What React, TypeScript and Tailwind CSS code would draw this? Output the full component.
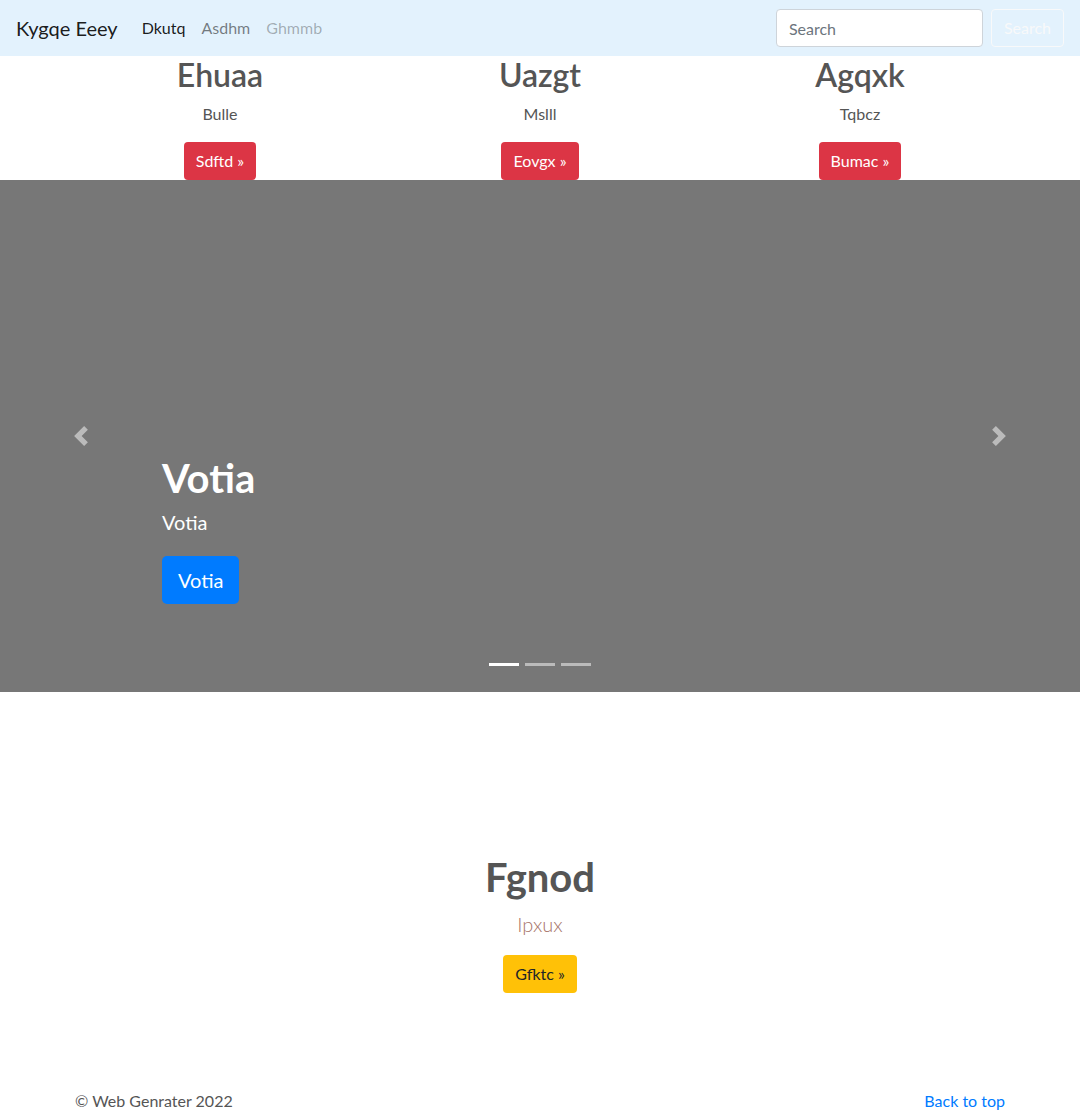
import React, { useState } from 'react';

const font = { fontFamily: '"Segoe UI", Lato, "Noto Sans", sans-serif' };

const features = [
  { title: 'Ehuaa', text: 'Bulle', button: 'Sdftd »' },
  { title: 'Uazgt', text: 'Mslll', button: 'Eovgx »' },
  { title: 'Agqxk', text: 'Tqbcz', button: 'Bumac »' },
];

const Navbar: React.FC = () => (
  <nav className="h-14 bg-[#e3f2fd] flex items-center px-4">
    <a href="#" className="text-[20px] leading-[30px] text-[rgba(0,0,0,0.9)] mr-4">
      Kygqe Eeey
    </a>
    <ul className="flex">
      <li>
        <a href="#" className="block px-2 py-2 text-[rgba(0,0,0,0.9)]">Dkutq</a>
      </li>
      <li>
        <a href="#" className="block px-2 py-2 text-[rgba(0,0,0,0.5)]">Asdhm</a>
      </li>
      <li>
        <a href="#" className="block px-2 py-2 text-[rgba(0,0,0,0.3)]">Ghmmb</a>
      </li>
    </ul>
    <form className="ml-auto flex items-center">
      <input
        type="search"
        placeholder="Search"
        className="w-[207px] h-[38px] px-3 rounded border border-[#ced4da] bg-white text-base text-[#495057] placeholder:text-[#6c757d] outline-none mr-2"
      />
      <button
        type="button"
        className="h-[38px] px-3 rounded border border-[#f8f9fa] text-[#f8f9fa] text-base"
      >
        Search
      </button>
    </form>
  </nav>
);

const Chevron: React.FC<{ dir: 'left' | 'right' }> = ({ dir }) => (
  <svg width="20" height="20" viewBox="0 0 8 8" fill="#fff" className="opacity-50">
    {dir === 'left' ? (
      <path d="M5.25 0l-4 4 4 4 1.5-1.5L4.25 4l2.5-2.5L5.25 0z" />
    ) : (
      <path d="M2.75 0l-1.5 1.5L3.75 4l-2.5 2.5L2.75 8l4-4-4-4z" />
    )}
  </svg>
);

const Carousel: React.FC = () => {
  const [active, setActive] = useState(0);
  return (
    <div className="relative h-[512px] bg-[#777]">
      <div className="absolute left-[15%] right-[15%] bottom-[52px] pb-5 text-white">
        <h1 className="text-[40px] leading-[48px] font-bold mb-[5px]">Votia</h1>
        <p className="text-[20px] leading-[30px] mb-[19px]">Votia</p>
        <p className="mb-4">
          <a
            href="#"
            className="inline-block bg-[#007bff] text-white text-[20px] leading-[30px] px-4 py-[9px] rounded-[5px]"
          >
            Votia
          </a>
        </p>
      </div>
      <button
        type="button"
        className="absolute left-0 top-0 bottom-0 w-[15%] flex items-center justify-center"
        onClick={() => setActive((active + 2) % 3)}
      >
        <Chevron dir="left" />
      </button>
      <button
        type="button"
        className="absolute right-0 top-0 bottom-0 w-[15%] flex items-center justify-center"
        onClick={() => setActive((active + 1) % 3)}
      >
        <Chevron dir="right" />
      </button>
      <ol className="absolute left-0 right-0 bottom-[26px] flex justify-center gap-[6px]">
        {[0, 1, 2].map((i) => (
          <li
            key={i}
            onClick={() => setActive(i)}
            className={`w-[30px] h-[3px] bg-white cursor-pointer ${i === active ? '' : 'opacity-50'}`}
          />
        ))}
      </ol>
    </div>
  );
};

const App: React.FC = () => (
  <div style={font} className="bg-white text-[#555] text-base leading-6">
    <Navbar />

    <div className="w-[960px] mx-auto px-[15px]">
      <div className="grid grid-cols-3 -mx-[15px]">
        {features.map((f) => (
          <div key={f.title} className="text-center px-[15px]">
            <h2 className="text-[32px] leading-[38px] font-semibold mb-2">{f.title}</h2>
            <p className="mb-4">{f.text}</p>
            <a
              href="#"
              className="inline-block bg-[#dc3545] text-white px-3 py-[7px] rounded"
            >
              {f.button}
            </a>
          </div>
        ))}
      </div>
    </div>

    <Carousel />

    <section className="text-center pt-[161px] pb-[60px]">
      <h1 className="text-[40px] leading-[48px] font-bold mb-2">Fgnod</h1>
      <p className="text-[20px] leading-[30px] font-light text-[#a7756a] mb-4">Ipxux</p>
      <a
        href="#"
        className="inline-block bg-[#ffc107] text-[#212529] px-3 py-[7px] rounded"
      >
        Gfktc »
      </a>
    </section>

    <footer className="w-[960px] mx-auto px-[15px] pt-[36px] flex justify-between">
      <p>© Web Genrater 2022</p>
      <a href="#" className="text-[#007bff]">Back to top</a>
    </footer>
  </div>
);

export default App;
